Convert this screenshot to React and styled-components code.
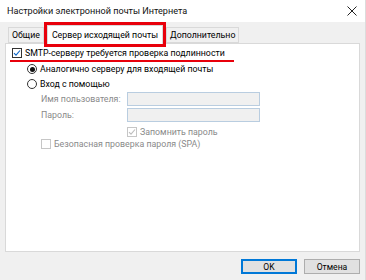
import React from "react";
import styled, { createGlobalStyle } from "styled-components";

const GlobalStyle = createGlobalStyle`
  html, body {
    margin: 0;
    padding: 0;
    background: #f0f0f0;
  }
  body {
    font-family: Roboto, "Noto Sans", "Liberation Sans", sans-serif;
    font-size: 8.8px;
    color: #000;
  }
`;

const Window = styled.div`
  width: 366px;
  height: 280px;
  box-sizing: border-box;
  background: #f0f0f0;
  border-right: 1px solid #dcdcdc;
  display: flex;
  flex-direction: column;
  overflow: hidden;
`;

const TitleBar = styled.div`
  height: 22px;
  flex-shrink: 0;
  background: #ffffff;
  display: flex;
  align-items: center;
  justify-content: space-between;
  padding: 0 8px 0 7px;
  font-size: 9.1px;
  color: #111;
`;

const Close = styled.svg`
  width: 10px;
  height: 10px;
`;

const Body = styled.div`
  flex: 1;
  display: flex;
  flex-direction: column;
  padding: 0 5px 0 5px;
`;

const TabRow = styled.div`
  height: 21px;
  display: flex;
  align-items: flex-end;
  padding-left: 3px;
  position: relative;
  z-index: 1;
`;

const Tab = styled.div`
  box-sizing: border-box;
  height: ${(p) => (p.$active ? "19px" : "16px")};
  padding: 0 ${(p) => (p.$active ? "4px" : "3px")};
  margin-bottom: ${(p) => (p.$active ? "-1px" : "0")};
  display: flex;
  align-items: center;
  background: ${(p) => (p.$active ? "#ffffff" : "#f0f0f0")};
  border: 1px solid #d9d9d9;
  border-bottom: ${(p) => (p.$active ? "none" : "1px solid #d9d9d9")};
  margin-left: ${(p) => (p.$active ? "3px" : "0")};
  margin-right: ${(p) => (p.$active ? "3px" : "0")};
  outline: ${(p) => (p.$active ? "3px solid #e8000b" : "none")};
  white-space: nowrap;
`;

const Panel = styled.div`
  height: 209px;
  box-sizing: border-box;
  background: #ffffff;
  border: 1px solid #d9d9d9;
  padding: 3px 0 0 6px;
  display: flex;
  flex-direction: column;
`;

const Row = styled.div`
  display: flex;
  align-items: center;
  height: ${(p) => p.$h || 15}px;
  margin-top: ${(p) => p.$mt || 0}px;
  padding-left: ${(p) => p.$indent || 0}px;
  color: ${(p) => (p.$disabled ? "#8a8a8a" : "#000")};
  white-space: nowrap;
`;

const Marked = styled.div`
  display: inline-flex;
  align-items: center;
  align-self: flex-start;
  height: 12px;
  padding: 0 9px 1px 2px;
  margin-left: -2px;
  border-bottom: 2px solid #e8000b;
  white-space: nowrap;
`;

const Box = styled.span`
  box-sizing: border-box;
  width: 10px;
  height: 10px;
  margin-right: 3px;
  flex-shrink: 0;
  border: 1px solid ${(p) => (p.$disabled ? "#c6c6c6" : "#333333")};
  background: #ffffff;
  display: flex;
  align-items: center;
  justify-content: center;
`;

const Radio = styled.span`
  box-sizing: border-box;
  width: 10px;
  height: 10px;
  margin-right: 3px;
  border-radius: 50%;
  border: 1px solid #333333;
  display: flex;
  align-items: center;
  justify-content: center;
  &::after {
    content: "";
    width: 5px;
    height: 5px;
    border-radius: 50%;
    background: ${(p) => (p.$on ? "#111" : "transparent")};
  }
`;

const Label = styled.span`
  width: 86px;
`;

const Field = styled.div`
  box-sizing: border-box;
  width: 133px;
  height: 14px;
  background: #f0f0f0;
  border: 1px solid #b9cde0;
`;

const Footer = styled.div`
  display: flex;
  justify-content: flex-end;
  gap: 7px;
  padding: 7px 0 0 0;
`;

const Button = styled.div`
  box-sizing: border-box;
  width: 56px;
  height: 15px;
  display: flex;
  align-items: center;
  justify-content: center;
  background: #e1e1e1;
  border: ${(p) => (p.$primary ? "2px solid #0078d7" : "1px solid #adadad")};
  font-size: 8.6px;
  color: #000;
`;

const Check = ({ color }) => (
  <svg width="8" height="8" viewBox="0 0 8 8">
    <path d="M1 4.2 L3 6.2 L7 1.5" fill="none" stroke={color} strokeWidth="1.1" />
  </svg>
);

export default function App() {
  return (
    <>
      <GlobalStyle />
      <Window>
        <TitleBar>
          <span>Настройки электронной почты Интернета</span>
          <Close viewBox="0 0 10 10">
            <path d="M0.5 0.5 L9.5 9.5 M9.5 0.5 L0.5 9.5" stroke="#222" strokeWidth="1" />
          </Close>
        </TitleBar>
        <Body>
          <TabRow>
            <Tab>Общие</Tab>
            <Tab $active>Сервер исходящей почты</Tab>
            <Tab>Дополнительно</Tab>
          </TabRow>
          <Panel>
            <Marked>
              <Box>
                <Check color="#0a64c8" />
              </Box>
              SMTP-серверу требуется проверка подлинности
            </Marked>
            <Row $indent={15} $h={14}>
              <Radio $on />
              Аналогично серверу для входящей почты
            </Row>
            <Row $indent={15} $h={15}>
              <Radio />
              Вход с помощью
            </Row>
            <Row $indent={29} $h={16} $disabled>
              <Label>Имя пользователя:</Label>
              <Field />
            </Row>
            <Row $indent={29} $h={16} $disabled>
              <Label>Пароль:</Label>
              <Field />
            </Row>
            <Row $indent={115} $h={12} $mt={3} $disabled>
              <Box $disabled>
                <Check color="#bdbdbd" />
              </Box>
              Запомнить пароль
            </Row>
            <Row $indent={29} $h={12} $disabled>
              <Box $disabled />
              Безопасная проверка пароля (SPA)
            </Row>
          </Panel>
          <Footer>
            <Button $primary>OK</Button>
            <Button>Отмена</Button>
          </Footer>
        </Body>
      </Window>
    </>
  );
}
